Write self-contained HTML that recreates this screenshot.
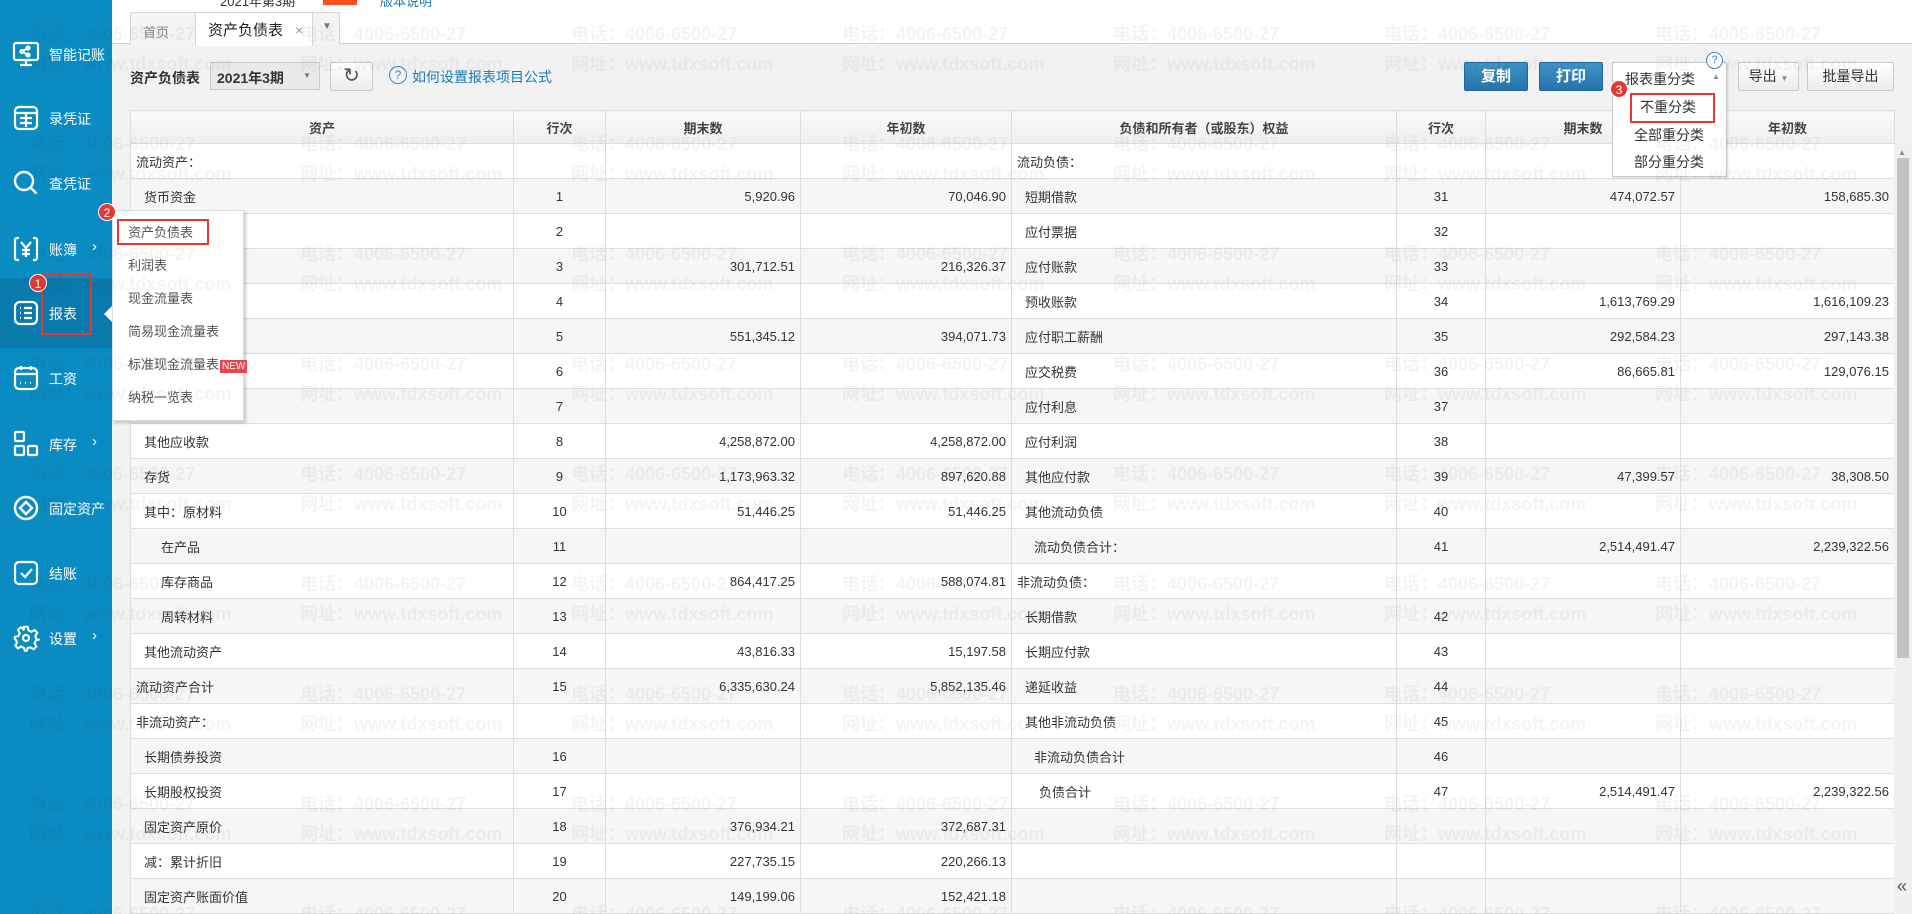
<!DOCTYPE html>
<html><head><meta charset="utf-8">
<style>
*{box-sizing:border-box;margin:0;padding:0}
body{width:1912px;height:914px;overflow:hidden;background:#f2f2f2;font-family:"Liberation Sans","Noto Sans CJK SC",sans-serif;color:#333;position:relative}
.side{position:absolute;left:0;top:0;width:112px;height:914px;background:#0a8cc3}
.si{position:absolute;left:0;width:112px;height:64px;color:#fff;font-size:14px}
.si .ic{position:absolute;left:12px;top:18px;width:28px;height:28px}
.si .tx{position:absolute;left:49px;top:23px}
.si .ar{position:absolute;left:92px;top:21px;font-size:15px}
.top{position:absolute;left:112px;top:0;width:1800px;height:44px;background:#fff;border-bottom:1px solid #cfcfcf}
.tab{position:absolute;top:12px;height:33px;border:1px solid #d6d6d6;border-bottom:none;background:#f4f4f4;font-size:13px;color:#888;padding:9px 0 0 12px}
.btn{position:absolute;top:62px;height:29px;border:1px solid #c9c9c9;background:linear-gradient(#fff,#ececec);font-size:14px;color:#333;text-align:center;line-height:27px;border-radius:2px}
.bb{background:linear-gradient(#3f93c8,#2672a6);border-color:#24689a;color:#fff;font-weight:bold;font-size:15px}
table{position:absolute;left:130px;top:110px;width:1764px;border-collapse:collapse;table-layout:fixed;font-size:13px;background:#fff}
td,th{border:1px solid #dedede;height:35px;padding:0 5px;white-space:nowrap;overflow:hidden}
th{height:33px;background:linear-gradient(#fafafa,#efefef);font-weight:bold;font-size:13px;color:#444}
tr:nth-child(odd) td{background:#f6f6f6}
.c{text-align:center}.r{text-align:right}
.i1{padding-left:13px}.i2{padding-left:30px}.i3{padding-left:22px}
.menu{position:absolute;left:112px;top:210px;width:132px;height:211px;background:#fff;border:1px solid #ddd;box-shadow:2px 2px 3px rgba(0,0,0,.2);font-size:13px;color:#555}
.menu div{position:absolute;left:15px;white-space:nowrap}
.badge{position:absolute;width:18px;height:18px;border-radius:50%;background:#e53935;color:#fff;font-size:12px;text-align:center;line-height:18px;border:1px solid #fff}
.rbox{position:absolute;border:2px solid #e53935}
</style></head><body>

<div class="top">
  <div style="position:absolute;left:108px;top:-9px;font-size:13px;color:#333">2021年第3期</div>
  <div style="position:absolute;left:211px;top:0;width:34px;height:5px;background:#f4511e"></div>
  <div style="position:absolute;left:268px;top:-9px;font-size:13px;color:#1a7bb9">版本说明</div>
</div>
<div class="tab" style="left:130px;width:66px">首页</div>
<div class="tab" style="left:195px;width:118px;background:#fff;color:#222;font-size:15px;padding-top:6px;height:34px">资产负债表 <span style="color:#999;font-size:14px;margin-left:8px">×</span></div>
<div class="tab" style="left:312px;width:28px;padding:8px 0 0 9px;color:#777;font-size:10px">▼</div>

<div style="position:absolute;left:130px;top:68px;font-size:14px;font-weight:bold;color:#333">资产负债表</div>
<div style="position:absolute;left:210px;top:62px;width:110px;height:28px;border:1px solid #cacaca;background:#e9e9e9;font-size:14px;font-weight:bold;padding:5px 0 0 6px">2021年3期<span style="position:absolute;right:8px;top:8px;font-size:8px;color:#777">▼</span></div>
<div class="btn" style="left:330px;width:43px;font-size:20px;color:#555">↻</div>
<div style="position:absolute;left:389px;top:66px;width:18px;height:18px;border:1px solid #3a8cc4;border-radius:50%;color:#3a8cc4;font-size:12px;text-align:center;line-height:16px">?</div>
<div style="position:absolute;left:412px;top:67px;font-size:14px;color:#1a7bb9">如何设置报表项目公式</div>

<div class="btn bb" style="left:1464px;width:64px">复制</div>
<div class="btn bb" style="left:1539px;width:64px">打印</div>
<div class="btn" style="left:1738px;width:61px">导出 <span style="font-size:8px;color:#888">▼</span></div>
<div class="btn" style="left:1807px;width:87px">批量导出</div>

<table>
<colgroup><col style="width:383px"><col style="width:92px"><col style="width:195px"><col style="width:211px"><col style="width:385px"><col style="width:89px"><col style="width:195px"><col style="width:214px"></colgroup>
<tr><th>资产</th><th>行次</th><th>期末数</th><th>年初数</th><th>负债和所有者（或股东）权益</th><th>行次</th><th>期末数</th><th>年初数</th></tr>
<tr><td>流动资产：</td><td></td><td></td><td></td><td>流动负债：</td><td></td><td></td><td></td></tr>
<tr><td class="i1">货币资金</td><td class="c">1</td><td class="r">5,920.96</td><td class="r">70,046.90</td><td class="i1">短期借款</td><td class="c">31</td><td class="r">474,072.57</td><td class="r">158,685.30</td></tr>
<tr><td class="i1">短期投资</td><td class="c">2</td><td></td><td></td><td class="i1">应付票据</td><td class="c">32</td><td></td><td></td></tr>
<tr><td class="i1">应收票据</td><td class="c">3</td><td class="r">301,712.51</td><td class="r">216,326.37</td><td class="i1">应付账款</td><td class="c">33</td><td></td><td></td></tr>
<tr><td class="i1">应收账款</td><td class="c">4</td><td></td><td></td><td class="i1">预收账款</td><td class="c">34</td><td class="r">1,613,769.29</td><td class="r">1,616,109.23</td></tr>
<tr><td class="i1">预付账款</td><td class="c">5</td><td class="r">551,345.12</td><td class="r">394,071.73</td><td class="i1">应付职工薪酬</td><td class="c">35</td><td class="r">292,584.23</td><td class="r">297,143.38</td></tr>
<tr><td class="i1">应收股利</td><td class="c">6</td><td></td><td></td><td class="i1">应交税费</td><td class="c">36</td><td class="r">86,665.81</td><td class="r">129,076.15</td></tr>
<tr><td class="i1">应收利息</td><td class="c">7</td><td></td><td></td><td class="i1">应付利息</td><td class="c">37</td><td></td><td></td></tr>
<tr><td class="i1">其他应收款</td><td class="c">8</td><td class="r">4,258,872.00</td><td class="r">4,258,872.00</td><td class="i1">应付利润</td><td class="c">38</td><td></td><td></td></tr>
<tr><td class="i1">存货</td><td class="c">9</td><td class="r">1,173,963.32</td><td class="r">897,620.88</td><td class="i1">其他应付款</td><td class="c">39</td><td class="r">47,399.57</td><td class="r">38,308.50</td></tr>
<tr><td class="i1">其中：原材料</td><td class="c">10</td><td class="r">51,446.25</td><td class="r">51,446.25</td><td class="i1">其他流动负债</td><td class="c">40</td><td></td><td></td></tr>
<tr><td class="i2">在产品</td><td class="c">11</td><td></td><td></td><td class="i3">流动负债合计：</td><td class="c">41</td><td class="r">2,514,491.47</td><td class="r">2,239,322.56</td></tr>
<tr><td class="i2">库存商品</td><td class="c">12</td><td class="r">864,417.25</td><td class="r">588,074.81</td><td>非流动负债：</td><td></td><td></td><td></td></tr>
<tr><td class="i2">周转材料</td><td class="c">13</td><td></td><td></td><td class="i1">长期借款</td><td class="c">42</td><td></td><td></td></tr>
<tr><td class="i1">其他流动资产</td><td class="c">14</td><td class="r">43,816.33</td><td class="r">15,197.58</td><td class="i1">长期应付款</td><td class="c">43</td><td></td><td></td></tr>
<tr><td>流动资产合计</td><td class="c">15</td><td class="r">6,335,630.24</td><td class="r">5,852,135.46</td><td class="i1">递延收益</td><td class="c">44</td><td></td><td></td></tr>
<tr><td>非流动资产：</td><td></td><td></td><td></td><td class="i1">其他非流动负债</td><td class="c">45</td><td></td><td></td></tr>
<tr><td class="i1">长期债券投资</td><td class="c">16</td><td></td><td></td><td class="i3">非流动负债合计</td><td class="c">46</td><td></td><td></td></tr>
<tr><td class="i1">长期股权投资</td><td class="c">17</td><td></td><td></td><td style="padding-left:27px">负债合计</td><td class="c">47</td><td class="r">2,514,491.47</td><td class="r">2,239,322.56</td></tr>
<tr><td class="i1">固定资产原价</td><td class="c">18</td><td class="r">376,934.21</td><td class="r">372,687.31</td><td></td><td></td><td></td><td></td></tr>
<tr><td class="i1">减：累计折旧</td><td class="c">19</td><td class="r">227,735.15</td><td class="r">220,266.13</td><td></td><td></td><td></td><td></td></tr>
<tr><td class="i1">固定资产账面价值</td><td class="c">20</td><td class="r">149,199.06</td><td class="r">152,421.18</td><td></td><td></td><td></td><td></td></tr>
</table>

<div style="position:absolute;left:1894px;top:144px;width:18px;height:770px;background:#f0f0f0"></div>
<div style="position:absolute;left:1898px;top:148px;font-size:8px;color:#888">▲</div>
<div style="position:absolute;left:1897px;top:158px;width:12px;height:500px;background:#c3c3c3"></div>
<div style="position:absolute;left:1897px;top:876px;font-size:18px;color:#555">«</div>

<div style="position:absolute;left:1612px;top:62px;width:115px;height:115px;background:#fff;border:1px solid #c9c9c9;box-shadow:1px 1px 2px rgba(0,0,0,.15);font-size:14px;color:#333">
  <div style="position:absolute;left:12px;top:6px">报表重分类</div>
  <div style="position:absolute;left:99px;top:9px;font-size:8px;color:#888">▲</div>
  <div style="position:absolute;left:27px;top:34px">不重分类</div>
  <div style="position:absolute;left:21px;top:62px">全部重分类</div>
  <div style="position:absolute;left:21px;top:89px">部分重分类</div>
</div>
<div class="rbox" style="left:1630px;top:93px;width:85px;height:30px"></div>
<div class="badge" style="left:1610px;top:80px">3</div>
<div style="position:absolute;left:1706px;top:52px;width:17px;height:17px;border:1px solid #3a8cc4;border-radius:50%;background:#fff;color:#3a8cc4;font-size:11px;text-align:center;line-height:15px">?</div>

<div class="side">
  <div style="position:absolute;left:0;top:278px;width:112px;height:70px;background:#087aab"></div>
  <div style="position:absolute;left:104px;top:306px;width:0;height:0;border-top:8px solid transparent;border-bottom:8px solid transparent;border-right:8px solid #fff"></div>
  <div class="si" style="top:22px"><svg class="ic" viewBox="0 0 28 28" fill="none" stroke="#fff" stroke-width="2.2"><rect x="2" y="3" width="24" height="17" rx="2"/><path d="M14 20v4M8 25h12"/><circle cx="16" cy="8" r="1.5"/><circle cx="10" cy="11.5" r="1.5"/><circle cx="16" cy="15" r="1.5"/><path d="M11 11l4-2.5M11 12l4 2.5"/></svg><span class="tx">智能记账</span></div>
  <div class="si" style="top:86px"><svg class="ic" viewBox="0 0 28 28" fill="none" stroke="#fff" stroke-width="2.2"><rect x="3" y="3" width="22" height="22" rx="4"/><path d="M3 9h22M8 14h12M8 19h12M14 9v14"/></svg><span class="tx">录凭证</span></div>
  <div class="si" style="top:151px"><svg class="ic" viewBox="0 0 28 28" fill="none" stroke="#fff" stroke-width="2.4"><circle cx="12" cy="12" r="9"/><path d="M18.5 18.5l6 6"/></svg><span class="tx">查凭证</span></div>
  <div class="si" style="top:217px"><svg class="ic" viewBox="0 0 28 28" fill="none" stroke="#fff" stroke-width="2.2"><path d="M7 3H5a2 2 0 0 0-2 2v18a2 2 0 0 0 2 2h2M21 3h2a2 2 0 0 1 2 2v18a2 2 0 0 1-2 2h-2M9 7l5 6 5-6M14 13v9M10 15h8M10 19h8"/></svg><span class="tx">账簿</span><span class="ar">›</span></div>
  <div class="si" style="top:281px"><svg class="ic" viewBox="0 0 28 28" fill="none" stroke="#fff" stroke-width="2.2"><rect x="3" y="3" width="22" height="22" rx="5"/><path d="M8 9h1M12 9h8M8 14h1M12 14h8M8 19h1M12 19h8"/></svg><span class="tx">报表</span></div>
  <div class="si" style="top:346px"><svg class="ic" viewBox="0 0 28 28" fill="none" stroke="#fff" stroke-width="2.2"><rect x="3" y="4" width="22" height="21" rx="4"/><path d="M3 10h22M9 2v4M19 2v4M8 19h1M13 19h1M18 19h1"/></svg><span class="tx">工资</span></div>
  <div class="si" style="top:412px"><svg class="ic" viewBox="0 0 28 28" fill="none" stroke="#fff" stroke-width="2.2"><rect x="3" y="2" width="9" height="9" rx="1"/><rect x="3" y="16" width="9" height="9" rx="1"/><rect x="16" y="16" width="9" height="9" rx="1"/></svg><span class="tx">库存</span><span class="ar">›</span></div>
  <div class="si" style="top:476px"><svg class="ic" viewBox="0 0 28 28" fill="none" stroke="#fff" stroke-width="2.4"><circle cx="14" cy="14" r="11"/><path d="M14 8l6 6-6 6-6-6z"/></svg><span class="tx">固定资产</span></div>
  <div class="si" style="top:541px"><svg class="ic" viewBox="0 0 28 28" fill="none" stroke="#fff" stroke-width="2.2"><rect x="3" y="3" width="22" height="22" rx="4"/><path d="M9 14l4 4 7-8"/></svg><span class="tx">结账</span></div>
  <div class="si" style="top:606px"><svg class="ic" viewBox="0 0 28 28" fill="none" stroke="#fff" stroke-width="2.2"><path d="M12 2h4l1 4 3 1.5 3.5-2 3 3-2 3.5L25 15l3 1v0l-3 1-1.5 3 2 3.5-3 3-3.5-2L16 25l-1 3h-2l-1-3-3-1.5-3.5 2-3-3 2-3.5L3 16l-1-1v-2l4-1 1.5-3-2-3.5 3-3 3.5 2L11 6z" transform="scale(0.92) translate(1,1)"/><circle cx="14" cy="14" r="3"/></svg><span class="tx">设置</span><span class="ar">›</span></div>
</div>
<div class="rbox" style="left:41px;top:273px;width:51px;height:62px"></div>
<div class="badge" style="left:29px;top:274px">1</div>

<div class="menu">
  <div style="top:11px">资产负债表</div>
  <div style="top:44px">利润表</div>
  <div style="top:77px">现金流量表</div>
  <div style="top:110px">简易现金流量表</div>
  <div style="top:143px">标准现金流量表<span style="background:#f0444c;color:#fff;font-size:10px;padding:1px 2px;margin-left:1px">NEW</span></div>
  <div style="top:176px">纳税一览表</div>
</div>
<div class="rbox" style="left:117px;top:219px;width:92px;height:26px"></div>
<div class="badge" style="left:98px;top:203px">2</div>

<svg style="position:absolute;left:0;top:0;pointer-events:none" width="1912" height="914">
<defs><pattern id="wm" x="29" y="22" width="271" height="110" patternUnits="userSpaceOnUse">
<text x="0" y="18" font-family="Liberation Sans,Noto Sans CJK SC,sans-serif" font-size="18" font-weight="bold" fill="rgba(0,0,0,0.045)">电话：4006-6500-27</text>
<text x="0" y="48" font-family="Liberation Sans,Noto Sans CJK SC,sans-serif" font-size="18" font-weight="bold" fill="rgba(0,0,0,0.045)">网址：www.tdxsoft.com</text>
</pattern></defs>
<rect x="0" y="0" width="1912" height="914" fill="url(#wm)"/>
</svg>
</body></html>
